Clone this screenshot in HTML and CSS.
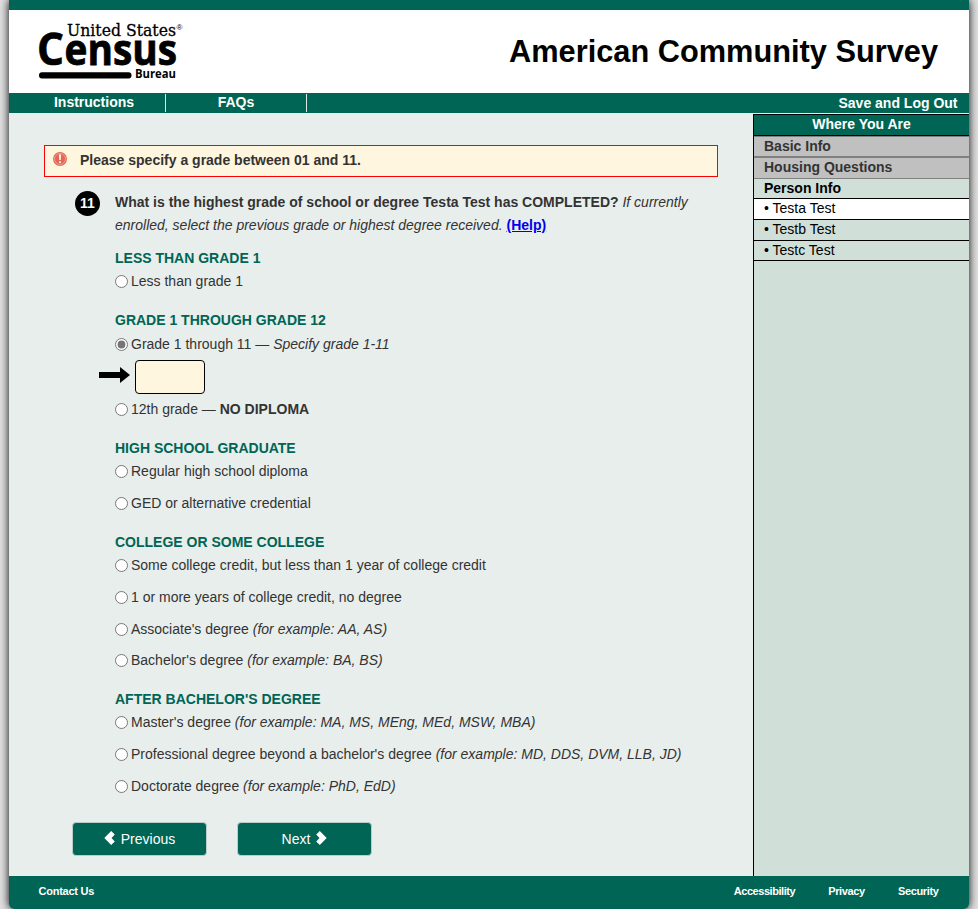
FILE: index.html
```html
<!DOCTYPE html>
<html lang="en">
<head>
<meta charset="utf-8">
<title>American Community Survey</title>
<link rel="stylesheet" href="styles.css">
</head>
<body>
<div class="page">
  <header class="header">
    <svg class="logo" width="148" height="60" viewBox="0 0 148 60" role="img" aria-label="United States Census Bureau">
      <text class="logo-us" x="29" y="13.8" textLength="109" lengthAdjust="spacingAndGlyphs">United States</text>
      <text class="logo-reg" x="138.5" y="8">®</text>
      <text class="logo-census" x="-1" y="43" textLength="27" lengthAdjust="spacingAndGlyphs">C</text>
      <text class="logo-ensus" x="26.5" y="43" textLength="112.5" lengthAdjust="spacingAndGlyphs">ensus</text>
      <rect x="1" y="50.2" width="92.5" height="6.4" rx="3"/>
      <text class="logo-bureau" x="97" y="56.3" textLength="41" lengthAdjust="spacingAndGlyphs">Bureau</text>
    </svg>
    <h1>American Community Survey</h1>
  </header>
  <nav class="nav">
    <a class="tab first">Instructions</a><a class="tab">FAQs</a><a class="logout">Save and Log Out</a>
  </nav>
  <div class="body">
    <main class="main">
      <div class="alert">
        <svg width="16" height="16" viewBox="0 0 16 16"><circle cx="8" cy="8" r="7" fill="#e36755"/><circle cx="8" cy="8" r="5.5" fill="none" stroke="#f0a093" stroke-width="1"/><path d="M7 3.5h2L8.7 9H7.3zM7.1 10.2h1.8v1.8H7.1z" fill="#fff"/></svg>
        <strong>Please specify a grade between 01 and 11.</strong>
      </div>
      <div class="question">
        <span class="number">11</span>
        <div class="content">
          <p class="prompt"><strong>What is the highest grade of school or degree Testa Test has COMPLETED?</strong> <em>If currently<br>enrolled, select the previous grade or highest degree received.</em> <a class="help" href="#">(Help)</a></p>
          <section class="group"><h2>LESS THAN GRADE 1</h2>
            <label><input type="radio" name="g"><span>Less than grade 1</span></label>
          </section>
          <section class="group"><h2>GRADE 1 THROUGH GRADE 12</h2>
            <label><input type="radio" name="g" checked><span>Grade 1 through 11 — <em>Specify grade 1-11</em></span></label>
            <div class="specify">
              <svg width="31" height="16" viewBox="0 0 31 16"><path d="M0 5h21V0l10 8-10 8v-5H0z"/></svg>
              <input type="text" class="grade" aria-label="Grade">
            </div>
            <label class="after"><input type="radio" name="g"><span>12th grade — <b>NO DIPLOMA</b></span></label>
          </section>
          <section class="group"><h2>HIGH SCHOOL GRADUATE</h2>
            <label><input type="radio" name="g"><span>Regular high school diploma</span></label>
            <label><input type="radio" name="g"><span>GED or alternative credential</span></label>
          </section>
          <section class="group"><h2>COLLEGE OR SOME COLLEGE</h2>
            <label><input type="radio" name="g"><span>Some college credit, but less than 1 year of college credit</span></label>
            <label><input type="radio" name="g"><span>1 or more years of college credit, no degree</span></label>
            <label><input type="radio" name="g"><span>Associate's degree <em>(for example: AA, AS)</em></span></label>
            <label class="tight"><input type="radio" name="g"><span>Bachelor's degree <em>(for example: BA, BS)</em></span></label>
          </section>
          <section class="group"><h2>AFTER BACHELOR'S DEGREE</h2>
            <label><input type="radio" name="g"><span>Master's degree <em>(for example: MA, MS, MEng, MEd, MSW, MBA)</em></span></label>
            <label><input type="radio" name="g"><span>Professional degree beyond a bachelor's degree <em>(for example: MD, DDS, DVM, LLB, JD)</em></span></label>
            <label><input type="radio" name="g"><span>Doctorate degree <em>(for example: PhD, EdD)</em></span></label>
          </section>
        </div>
      </div>
      <div class="buttons">
        <button><svg width="11" height="14" viewBox="0 0 11 14"><path d="M7.2 0 10.8 3.5 7.5 7l3.3 3.5L7.2 14 .3 7z" fill="#fff"/></svg><span>Previous</span></button>
        <button><span>Next</span><svg width="11" height="14" viewBox="0 0 11 14"><path d="M3.8 0 .2 3.5 3.5 7 .2 10.5 3.8 14l6.9-7z" fill="#fff"/></svg></button>
      </div>
    </main>
    <aside class="side">
      <div class="side-title">Where You Are</div>
      <div class="done">Basic Info</div>
      <div class="done">Housing Questions</div>
      <div class="current">Person Info</div>
      <div class="person active">• Testa Test</div>
      <div class="person">• Testb Test</div>
      <div class="person last">• Testc Test</div>
    </aside>
  </div>
  <footer class="footer">
    <a class="contact">Contact Us</a><a class="access">Accessibility</a><a>Privacy</a><a>Security</a>
  </footer>
</div>
</body>
</html>
```
FILE: styles.css
```css
* { box-sizing: border-box; }
html { height: 909px; overflow: hidden; background: #e1e1e1; }
body { margin: 0; font: 14px/20px "Liberation Sans", Arial, sans-serif; color: #333; }
.page { width: 960px; height: 909px; margin-left: 9px; display: flex; flex-direction: column; background: #e8eeec; border-radius: 0 0 5px 5px; box-shadow: 0 0 10px #000; overflow: hidden; }
.header { height: 93px; border-top: 10px solid #006554; background: #fff; display: flex; justify-content: space-between; padding: 12px 31px 0 29px; flex: none; }
.logo { overflow: visible; }
.logo-us { font: 17px "DejaVu Serif", serif; stroke: #000; stroke-width: .3px; }
.logo-reg { font: 8px "Liberation Sans", sans-serif; }
.logo-census { font: bold 45px "Open Sans", sans-serif; stroke: #000; stroke-width: .7px; }
.logo-ensus { font: bold 43.5px "Open Sans", sans-serif; stroke: #000; stroke-width: .8px; }
.logo-bureau { font: bold 13px "Open Sans", sans-serif; }
h1 { margin: 12px 0 0; font-size: 30.75px; line-height: 36px; color: #000; white-space: nowrap; }
.nav { height: 20px; flex: none; background: #006554; color: #fff; font-weight: bold; display: flex; line-height: 18px; }
.tab { width: 141px; height: 18px; margin-top: 1px; border-right: 1px solid #dce8e4; text-align: center; line-height: 17px; }
.tab.first { width: 157px; padding-left: 14px; }
.logout { margin: 1px 11.5px 0 auto; line-height: 19px; }
.body { height: 763px; flex: none; display: flex; }
.main { width: 744px; padding: 32px 0 0 35px; }
.alert { width: 674px; height: 32px; border: 1px solid #f00; background: #fff6df; display: flex; padding: 5px 0 0 7px; gap: 12px; line-height: 19px; }
.question { display: flex; margin-top: 14px; padding-left: 31px; }
.number { width: 25px; height: 25px; border-radius: 50%; background: #000; color: #fff; font-weight: bold; text-align: center; line-height: 25px; margin-right: 15px; flex: none; }
.content { white-space: nowrap; }
.prompt { margin: 0; line-height: 23px; }
.help { font-weight: bold; color: #00e; }
.group { margin-top: 19px; }
.prompt + .group { margin-top: 11px; }
h2 { font-size: 14px; line-height: 20px; margin: 0 0 3px; color: #006554; }
.group:nth-of-type(2) h2 { margin-bottom: 4px; }
label { display: flex; align-items: center; height: 20px; }
label + label { margin-top: 12px; }
label + label.tight { margin-top: 11px; }
label input { width: 13px; height: 13px; margin: 1px 3px 0 0; accent-color: #767676; }
.specify { display: flex; align-items: center; margin: 6px 0 0 -16px; height: 34px; gap: 5px; }
.specify svg { position: relative; top: -2px; }
.grade { width: 70px; height: 34px; border: 1px solid #000; border-radius: 4px; background: #fff6df; padding: 6px; }
.after { margin-top: 5px; }
.buttons { display: flex; gap: 30px; margin: 26px 0 0 28px; }
button { width: 135px; height: 34px; border: 1px solid #b9ceca; border-radius: 4px; background: #006554; color: #fff; font: 14px "Liberation Sans", Arial, sans-serif; display: flex; align-items: center; justify-content: center; gap: 6px; padding: 0; }
button svg { position: relative; top: -1px; }
.side { width: 216px; margin-top: 1px; border-left: 1px solid #000; background: #d0dfd8; color: #000; }
.side-title { height: 22px; border: solid #000; border-width: 1px 0; background: #006554; color: #fff; font-weight: bold; text-align: center; line-height: 19px; }
.done, .current { height: 21px; padding-left: 10px; font-weight: bold; }
.done { background: #c0c0c0; color: #333; border-top: 1px solid #808080; border-bottom: 1px solid #808080; line-height: 19px; }
.done + .done { height: 22px; }
.current { height: 20px; border-bottom: 1px solid #000; line-height: 18px; }
.person { height: 21px; padding-left: 10px; border-bottom: 1px solid #000; line-height: 19px; }
.last { height: 20px; }
.active { background: #fff; }
.footer { flex: 1; background: #006554; color: #fff; font-size: 11px; font-weight: bold; line-height: 30px; letter-spacing: -.35px; display: flex; gap: 33px; padding: 0 30.5px 0 29.5px; }
.contact { margin-right: auto; letter-spacing: -.25px; }
.access { letter-spacing: -.45px; }
```
